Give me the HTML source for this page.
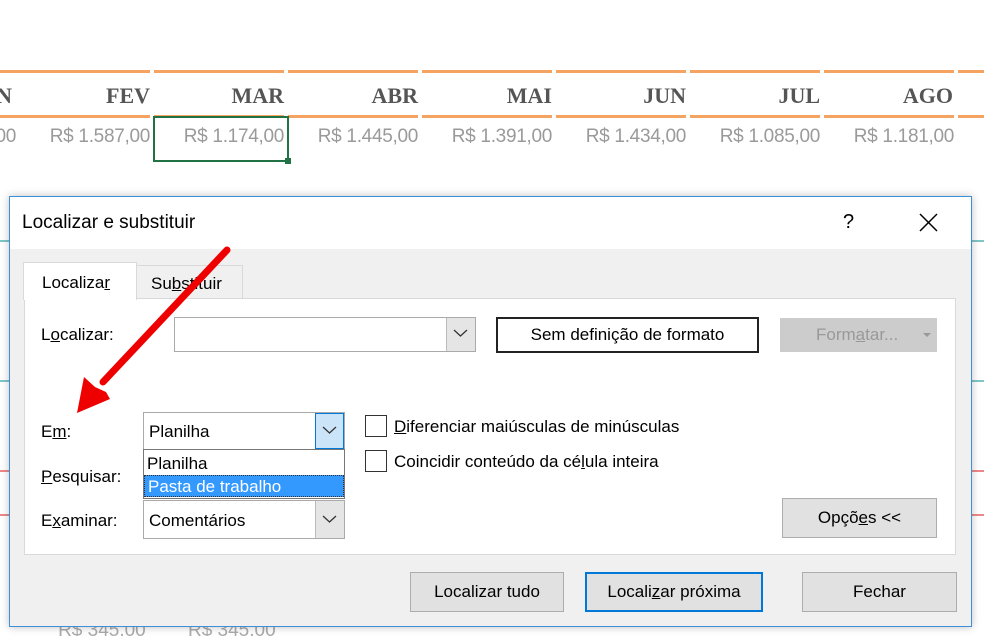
<!DOCTYPE html>
<html><head><meta charset="utf-8"><style>
*{margin:0;padding:0;box-sizing:border-box}
html,body{width:984px;height:636px;overflow:hidden}
body{background:#fff;position:relative;font-family:"Liberation Sans",sans-serif}
.a{position:absolute}
.mh{position:absolute;top:83px;font-family:"Liberation Serif",serif;font-weight:bold;font-size:22px;color:#555;text-align:right;width:120px}
.v{position:absolute;top:126px;font-size:19px;color:#9a9a9a;text-align:right;width:130px;letter-spacing:-0.3px}
.t{position:absolute;font-size:17px;color:#000;white-space:nowrap}
.btn{position:absolute;background:#e1e1e1;border:1px solid #adadad;font-size:17px;text-align:center;color:#000}
u{text-decoration:underline}
</style></head><body>
<div class="a" style="left:0;top:70px;width:984px;height:3px;background:repeating-linear-gradient(90deg,#f4a460 0 130px,#fff 130px 134px);background-position:20px 0"></div>
<div class="a" style="left:0;top:115px;width:984px;height:3px;background:repeating-linear-gradient(90deg,#f4a460 0 130px,#fff 130px 134px);background-position:20px 0"></div>
<div class="mh" style="left:-108px">N</div>
<div class="mh" style="left:30px">FEV</div>
<div class="mh" style="left:164px">MAR</div>
<div class="mh" style="left:298px">ABR</div>
<div class="mh" style="left:432px">MAI</div>
<div class="mh" style="left:566px">JUN</div>
<div class="mh" style="left:700px">JUL</div>
<div class="mh" style="left:833px">AGO</div>
<div class="v" style="left:-114px">1.000,00</div>
<div class="v" style="left:20px">R$ 1.587,00</div>
<div class="v" style="left:154px">R$ 1.174,00</div>
<div class="v" style="left:288px">R$ 1.445,00</div>
<div class="v" style="left:422px">R$ 1.391,00</div>
<div class="v" style="left:556px">R$ 1.434,00</div>
<div class="v" style="left:690px">R$ 1.085,00</div>
<div class="v" style="left:824px">R$ 1.181,00</div>
<div class="a" style="left:153px;top:116px;width:136px;height:46px;border:2px solid #217346"></div>
<div class="a" style="left:285px;top:158px;width:6px;height:6px;background:#217346"></div>
<div class="a" style="left:0;top:620px;width:984px;height:16px;overflow:hidden;font-size:19px;color:#aaa;white-space:nowrap">&nbsp;&nbsp;&nbsp;&nbsp;&nbsp;&nbsp;&nbsp;&nbsp;&nbsp;&nbsp;&nbsp;R$ 345,00&nbsp;&nbsp;&nbsp;&nbsp;&nbsp;&nbsp;&nbsp;&nbsp;R$ 345,00</div>
<div class="a" style="left:0;top:240px;width:984px;height:2px;background:#7fc6c6"></div>
<div class="a" style="left:0;top:380px;width:984px;height:2px;background:#7fc6c6"></div>
<div class="a" style="left:0;top:470px;width:984px;height:2px;background:#e88"></div>
<div class="a" style="left:0;top:514px;width:984px;height:2px;background:#e88"></div>
<div class="a" style="left:9px;top:196px;width:963px;height:431px;background:#f0f0f0;border:1px solid #3d8fd8;box-shadow:0 0 8px rgba(0,0,0,.25)"></div>
<div class="a" style="left:10px;top:197px;width:961px;height:52px;background:#fff"></div>
<div class="t" style="left:22px;top:212px;font-size:19px">Localizar e substituir</div>
<div class="t" style="left:843px;top:211px;font-size:20px">?</div>
<svg class="a" style="left:919px;top:213px" width="19" height="19"><path d="M1 1L18 18M18 1L1 18" stroke="#000" stroke-width="1.5"/></svg>
<div class="a" style="left:136px;top:265px;width:107px;height:34px;background:#f0f0f0;border:1px solid #d9d9d9"></div>
<div class="t" style="left:151px;top:274px">Su<u>b</u>stituir</div>
<div class="a" style="left:24px;top:298px;width:932px;height:257px;background:#fff;border:1px solid #d9d9d9"></div>
<div class="a" style="left:23px;top:262px;width:114px;height:38px;background:#fff;border:1px solid #d9d9d9;border-bottom:none"></div>
<div class="t" style="left:42px;top:273px">Localiza<u>r</u></div>
<div class="t" style="left:41px;top:325px">L<u>o</u>calizar:</div>
<div class="a" style="left:174px;top:317px;width:302px;height:35px;background:#fff;border:1px solid #aaa"></div>
<div class="a" style="left:446px;top:318px;width:29px;height:33px;background:#e5e5e5;border-left:1px solid #bbb"></div>
<svg class="a" style="left:453px;top:328px" width="15" height="10"><path d="M1 2L7.5 8L14 2" stroke="#333" fill="none" stroke-width="1.3"/></svg>
<div class="btn" style="left:496px;top:317px;width:263px;height:36px;border:2px solid #222;background:#fff;line-height:31px">Sem definição de formato</div>
<div class="btn" style="left:780px;top:318px;width:157px;height:34px;background:#ccc;border-color:#ccc;color:#999;line-height:32px;text-align:left;padding-left:35px">Form<u>a</u>tar...</div>
<svg class="a" style="left:923px;top:333px" width="8" height="5"><path d="M0 0H8L4 4Z" fill="#999"/></svg>
<div class="t" style="left:41px;top:422px">E<u>m</u>:</div>
<div class="a" style="left:143px;top:412px;width:202px;height:38px;background:#fff;border:1px solid #aaa"></div>
<div class="t" style="left:149px;top:422px">Planilha</div>
<div class="a" style="left:315px;top:413px;width:29px;height:36px;background:#cce4f7;border:1px solid #0078d7"></div>
<svg class="a" style="left:322px;top:425px" width="15" height="10"><path d="M1 2L7.5 8L14 2" stroke="#333" fill="none" stroke-width="1.3"/></svg>
<div class="a" style="left:143px;top:449px;width:202px;height:50px;background:#fff;border:1px solid #777"></div>
<div class="t" style="left:147px;top:454px">Planilha</div>
<div class="a" style="left:144px;top:475px;width:200px;height:22px;background:#3399ff;border:1px dotted #333"></div>
<div class="t" style="left:148px;top:477px;color:#fff">Pasta de trabalho</div>
<div class="t" style="left:41px;top:467px"><u>P</u>esquisar:</div>
<div class="t" style="left:41px;top:511px">E<u>x</u>aminar:</div>
<div class="a" style="left:143px;top:500px;width:202px;height:39px;background:#fff;border:1px solid #aaa"></div>
<div class="t" style="left:149px;top:511px">Comentários</div>
<div class="a" style="left:315px;top:501px;width:29px;height:37px;background:#e5e5e5;border-left:1px solid #bbb"></div>
<svg class="a" style="left:322px;top:514px" width="15" height="10"><path d="M1 2L7.5 8L14 2" stroke="#333" fill="none" stroke-width="1.3"/></svg>
<div class="a" style="left:365px;top:415px;width:22px;height:22px;border:1px solid #333;background:#fff"></div>
<div class="t" style="left:394px;top:417px"><u>D</u>iferenciar maiúsculas de minúsculas</div>
<div class="a" style="left:365px;top:450px;width:22px;height:22px;border:1px solid #333;background:#fff"></div>
<div class="t" style="left:394px;top:452px">Coincidir conteúdo da cé<u>l</u>ula inteira</div>
<div class="btn" style="left:782px;top:498px;width:155px;height:40px;line-height:38px">Opçõ<u>e</u>s &lt;&lt;</div>
<div class="btn" style="left:410px;top:572px;width:154px;height:40px;line-height:38px">Localizar tudo</div>
<div class="btn" style="left:585px;top:572px;width:178px;height:40px;line-height:36px;border:2px solid #0078d7">Locali<u>z</u>ar próxima</div>
<div class="btn" style="left:802px;top:572px;width:155px;height:40px;line-height:38px">Fechar</div>
<svg class="a" style="left:0;top:0" width="984" height="636"><path d="M227 250L103 382" stroke="#e00" stroke-width="7" stroke-linecap="round"/><path d="M77 413L84 377L95 387L106 392L110 399Z" fill="#e00"/></svg>
</body></html>
